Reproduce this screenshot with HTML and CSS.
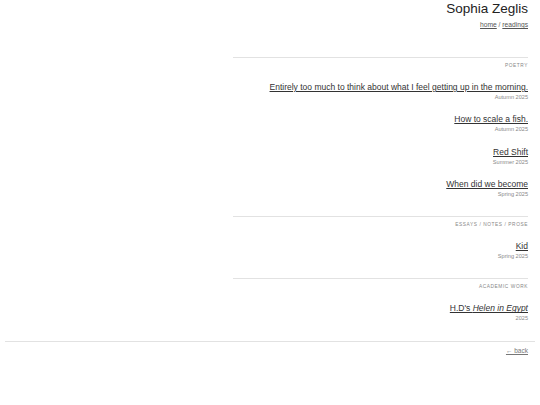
FILE: index.html
```html
<!DOCTYPE html>
<html lang="en">
<head>
<meta charset="utf-8">
<title>Sophia Zeglis — readings</title>
<link rel="stylesheet" href="styles.css">
</head>
<body>
<div class="page">
  <header class="header">
    <h1 class="name">Sophia Zeglis</h1>
    <nav class="nav"><a href="#">home</a> / <a href="#">readings</a></nav>
  </header>
  <main class="main">
    <section class="section">
      <div class="label">Poetry</div>
      <div class="item"><a class="title" href="#">Entirely too much to think about what I feel getting up in the morning.</a><div class="date">Autumn 2025</div></div>
      <div class="item"><a class="title" href="#">How to scale a fish.</a><div class="date">Autumn 2025</div></div>
      <div class="item"><a class="title" href="#">Red Shift</a><div class="date">Summer 2025</div></div>
      <div class="item"><a class="title" href="#">When did we become</a><div class="date">Spring 2025</div></div>
    </section>
    <section class="section">
      <div class="label">Essays / Notes / Prose</div>
      <div class="item"><a class="title" href="#">Kid</a><div class="date">Spring 2025</div></div>
    </section>
    <section class="section">
      <div class="label">Academic Work</div>
      <div class="item"><a class="title" href="#">H.D's <em>Helen in Egypt</em></a><div class="date">2025</div></div>
    </section>
  </main>
  <footer class="footer">
    <a class="back" href="#">← back</a>
  </footer>
</div>
</body>
</html>
```
FILE: styles.css
```css
html, body {
  margin: 0;
  padding: 0;
  background: #fff;
}
body {
  font-family: "Liberation Sans", Arial, sans-serif;
  color: #222;
}
.page {
  padding: 0 5px;
}
.header {
  text-align: right;
  padding: 1px 7px 0 0;
}
.name {
  margin: 0;
  font-size: 13.5px;
  line-height: 15px;
  font-weight: normal;
  color: #222;
}
.nav {
  margin-top: 5px;
  font-size: 6.7px;
  line-height: 8px;
  color: #666;
}
.nav a {
  color: #555;
}
.main {
  width: 295px;
  margin: 28px 7px 0 auto;
  text-align: right;
}
.section {
  border-top: 1px solid #e2e2e2;
  padding: 5px 0 5px;
}
.label {
  font-size: 4.8px;
  line-height: 6px;
  letter-spacing: 0.12em;
  text-transform: uppercase;
  color: #888;
  margin-bottom: 13px;
}
.item {
  margin-bottom: 13.3px;
}
.title {
  display: block;
  font-size: 8.5px;
  line-height: 10px;
  color: #333;
}
.date {
  font-size: 5.6px;
  line-height: 7px;
  color: #888;
  margin-top: 2px;
}
.footer {
  border-top: 1px solid #e2e2e2;
  padding: 5px 7px 0 0;
  text-align: right;
  font-size: 6.5px;
  line-height: 8px;
}
.back {
  color: #777;
}
```
